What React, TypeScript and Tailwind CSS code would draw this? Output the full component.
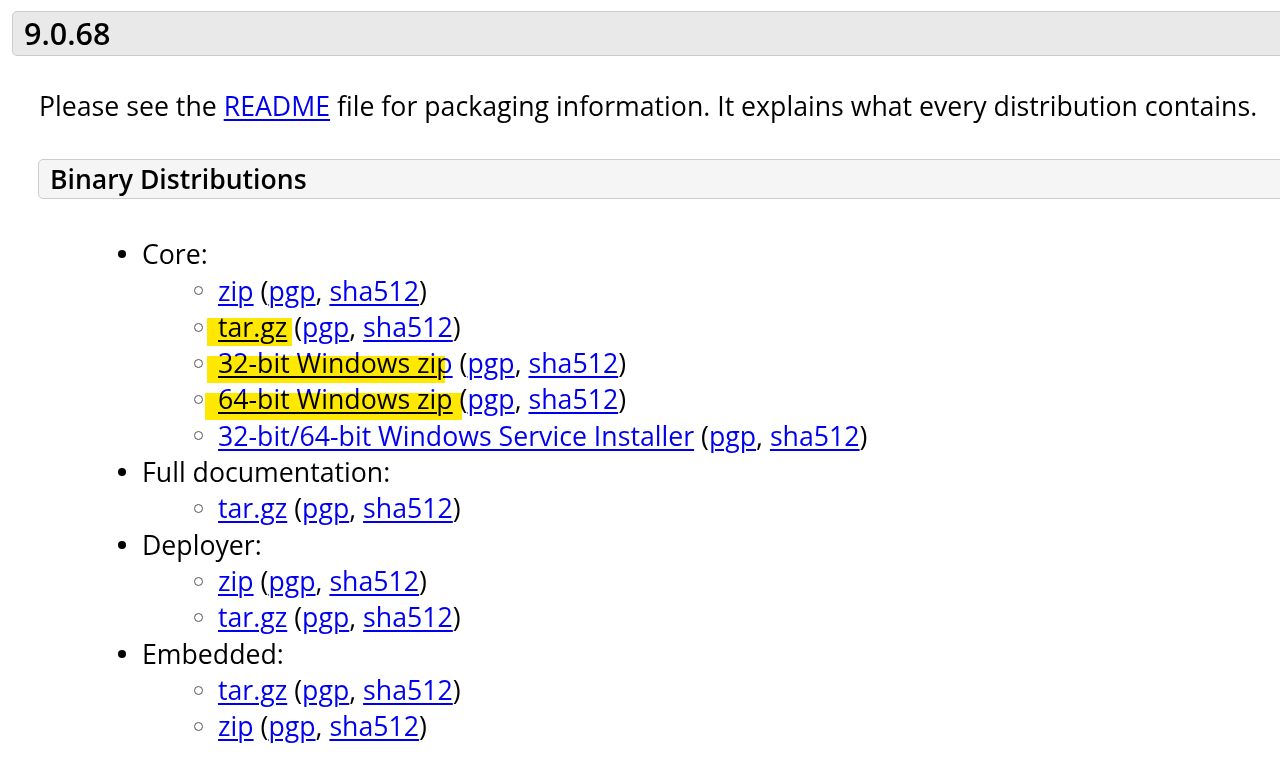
import React from 'react';

type Row = {
  label: string;
  mark?: { left: number; top: number; width: number; height: number };
};

const groups: { title: string; items: Row[] }[] = [
  {
    title: 'Core:',
    items: [
      { label: 'zip' },
      { label: 'tar.gz', mark: { left: -11, top: 9, width: 85, height: 28 } },
      { label: '32-bit Windows zip', mark: { left: -11, top: 11, width: 238, height: 27 } },
      { label: '64-bit Windows zip', mark: { left: -13, top: 12, width: 257, height: 27 } },
      { label: '32-bit/64-bit Windows Service Installer' },
    ],
  },
  { title: 'Full documentation:', items: [{ label: 'tar.gz' }] },
  { title: 'Deployer:', items: [{ label: 'zip' }, { label: 'tar.gz' }] },
  { title: 'Embedded:', items: [{ label: 'tar.gz' }, { label: 'zip' }] },
];

const Link = ({ children }: { children: React.ReactNode }) => (
  <a href="#" className="text-[#0000ee] underline underline-offset-[3px] decoration-[2px]">
    {children}
  </a>
);

const App = () => {
  return (
    <div
      className="w-[1280px] h-[770px] overflow-hidden bg-white text-black text-[26.7px] leading-[36.3px]"
      style={{ fontFamily: '"Open Sans", "Liberation Sans", sans-serif' }}
    >
      {/* Version header */}
      <div className="ml-[12px] mt-[11px] w-[1320px] h-[45px] rounded-[5px] border border-[#cccccc] bg-[#e9e9e9] pl-[11px] flex items-center">
        <h2 className="text-[30.5px] font-semibold leading-none">9.0.68</h2>
      </div>

      <p className="ml-[39px] mt-[32px]">
        Please see the <Link>README</Link> file for packaging information. It explains what every distribution contains.
      </p>

      {/* Binary Distributions */}
      <div className="ml-[38px] mt-[35px] w-[1320px] h-[40px] rounded-[5px] border border-[#cccccc] bg-[#f5f5f5] pl-[11px] flex items-center">
        <h3 className="text-[26.6px] font-semibold leading-none">Binary Distributions</h3>
      </div>

      <ul className="mt-[37px]">
        {groups.map((g) => (
          <li key={g.title}>
            <div className="flex items-center">
              <span className="ml-[118px] mr-[16px] w-[8px] h-[8px] rounded-full bg-black shrink-0" />
              <span>{g.title}</span>
            </div>
            <ul>
              {g.items.map((it, i) => (
                <li key={i} className="flex items-center">
                  <span className="ml-[194px] mr-[15px] w-[9px] h-[9px] rounded-full border border-[#555] shrink-0" />
                  <span className="relative whitespace-nowrap">
                    <Link>{it.label}</Link>
                    {it.mark && (
                      <span
                        className="absolute bg-[#ffe800] mix-blend-multiply pointer-events-none"
                        style={{ left: it.mark.left, top: it.mark.top, width: it.mark.width, height: it.mark.height }}
                      />
                    )}{' '}
                    (<Link>pgp</Link>, <Link>sha512</Link>)
                  </span>
                </li>
              ))}
            </ul>
          </li>
        ))}
      </ul>
    </div>
  );
};

export default App;
